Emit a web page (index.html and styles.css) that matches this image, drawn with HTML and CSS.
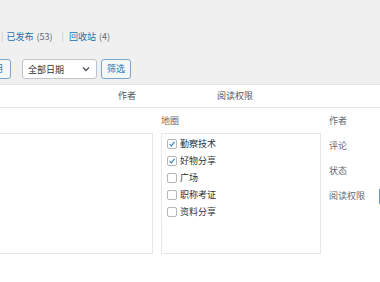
FILE: index.html
```html
<!DOCTYPE html>
<html lang="zh-CN">
<head>
<meta charset="utf-8">
<link rel="stylesheet" href="styles.css">
</head>
<body>
<div class="page">
  <div class="top">
    <div class="subsubsub">
      <span class="sep">|</span>
      <a class="link">已发布</a><span class="count">(53)</span>
      <span class="sep sep2">|</span>
      <a class="link">回收站</a><span class="count">(4)</span>
    </div>
    <div class="tablenav">
      <span class="btn btn-apply">应用</span>
      <div class="select">
        <span>全部日期</span>
        <svg class="chev" width="8" height="6" viewBox="0 0 8 6"><path d="M1 1.5 L4 4.5 L7 1.5" fill="none" stroke="#50575e" stroke-width="1.4"/></svg>
      </div>
      <span class="btn btn-filter">筛选</span>
    </div>
  </div>
  <div class="thead">
    <div class="th th-title"></div>
    <div class="th">作者</div>
    <div class="th">阅读权限</div>
  </div>
  <div class="quickedit">
    <div class="col col-left">
      <div class="box box-left"></div>
    </div>
    <div class="col col-mid">
      <div class="label">地圈</div>
      <div class="box cats">
        <div class="cat"><span class="cb checked"><svg width="10" height="10" viewBox="0 0 10 10"><path d="M2 5.2 L4.1 7.3 L8.2 2.4" fill="none" stroke="#3582c4" stroke-width="1.5"/></svg></span>勤察技术</div>
        <div class="cat"><span class="cb checked"><svg width="10" height="10" viewBox="0 0 10 10"><path d="M2 5.2 L4.1 7.3 L8.2 2.4" fill="none" stroke="#3582c4" stroke-width="1.5"/></svg></span>好物分享</div>
        <div class="cat"><span class="cb"></span>广场</div>
        <div class="cat"><span class="cb"></span>职称考证</div>
        <div class="cat"><span class="cb"></span>资料分享</div>
      </div>
    </div>
    <div class="col col-right">
      <div class="field"><span class="flabel">作者</span></div>
      <div class="field"><span class="flabel">评论</span></div>
      <div class="field"><span class="flabel">状态</span></div>
      <div class="field"><span class="flabel">阅读权限</span><span class="fselect"></span></div>
    </div>
  </div>
</div>
</body>
</html>
```

FILE: styles.css
```css
html, body {
  margin: 0;
  padding: 0;
  background: #ffffff;
}
body {
  width: 380px;
  height: 282px;
  overflow: hidden;
  font-family: "Noto Sans CJK SC", "Noto Sans", sans-serif;
  font-size: 9px;
  color: #3c434a;
}
.page {
  width: 380px;
}
.top {
  background: #f0f0f1;
  height: 84px;
  border-bottom: 1px solid #e2e3e5;
  overflow: hidden;
}
.subsubsub {
  margin-top: 30px;
  height: 14px;
  line-height: 14px;
  display: flex;
  align-items: center;
  white-space: nowrap;
  color: #646970;
}
.sep {
  color: #c3c4c7;
  margin-left: 1px;
  margin-right: 3px;
}
.sep2 {
  margin-left: 9px;
  margin-right: 5px;
}
.link {
  color: #2271b1;
}
.count {
  color: #646970;
  margin-left: 3px;
}
.tablenav {
  margin-top: 15px;
  display: flex;
  align-items: center;
  height: 20px;
}
.btn {
  box-sizing: border-box;
  height: 20px;
  line-height: 18px;
  border: 1px solid #7aa6cc;
  border-radius: 3px;
  background: #f6f7f7;
  color: #2271b1;
  text-align: center;
}
.btn-apply {
  width: 34px;
  margin-left: -23px;
}
.select {
  box-sizing: border-box;
  width: 75px;
  height: 20px;
  margin-left: 11px;
  border: 1px solid #c3c4c7;
  border-radius: 3px;
  background: #fff;
  display: flex;
  align-items: center;
  justify-content: space-between;
  padding: 0 6px 0 5px;
  color: #2c3338;
}
.chev {
  display: block;
}
.btn-filter {
  width: 30px;
  margin-left: 4px;
}
.thead {
  display: grid;
  grid-template-columns: 118px 99px 1fr;
  height: 22px;
  line-height: 22px;
  border-bottom: 1px solid #e2e3e5;
  color: #50575e;
}
.quickedit {
  display: grid;
  grid-template-columns: 153px 160px 200px;
  column-gap: 8px;
  padding-top: 6px;
  width: 529px;
}
.col-left {
  padding-top: 19px;
}
.box {
  box-sizing: border-box;
  height: 121px;
  border: 1px solid #e6e7e8;
  background: #fff;
}
.box-left {
  margin-left: -4px;
}
.label {
  height: 14px;
  line-height: 14px;
  color: #646970;
}
.cats {
  margin-top: 5px;
  padding: 1px 0 0 5px;
}
.cat {
  height: 17px;
  display: flex;
  align-items: center;
  color: #2c3338;
}
.cb {
  box-sizing: border-box;
  width: 10px;
  height: 10px;
  border: 1px solid #b4b7bb;
  border-radius: 2px;
  margin-right: 3px;
  background: #fff;
  display: flex;
  align-items: center;
  justify-content: center;
}
.cb svg {
  display: block;
}
.col-right {
  display: flex;
  flex-direction: column;
  gap: 11px;
}
.field {
  height: 14px;
  line-height: 14px;
  display: flex;
  align-items: center;
  color: #646970;
}
.flabel {
  width: 50px;
  flex: none;
}
.fselect {
  box-sizing: border-box;
  width: 60px;
  height: 17px;
  border: 1px solid #6e98bd;
  border-radius: 2px;
}
```
